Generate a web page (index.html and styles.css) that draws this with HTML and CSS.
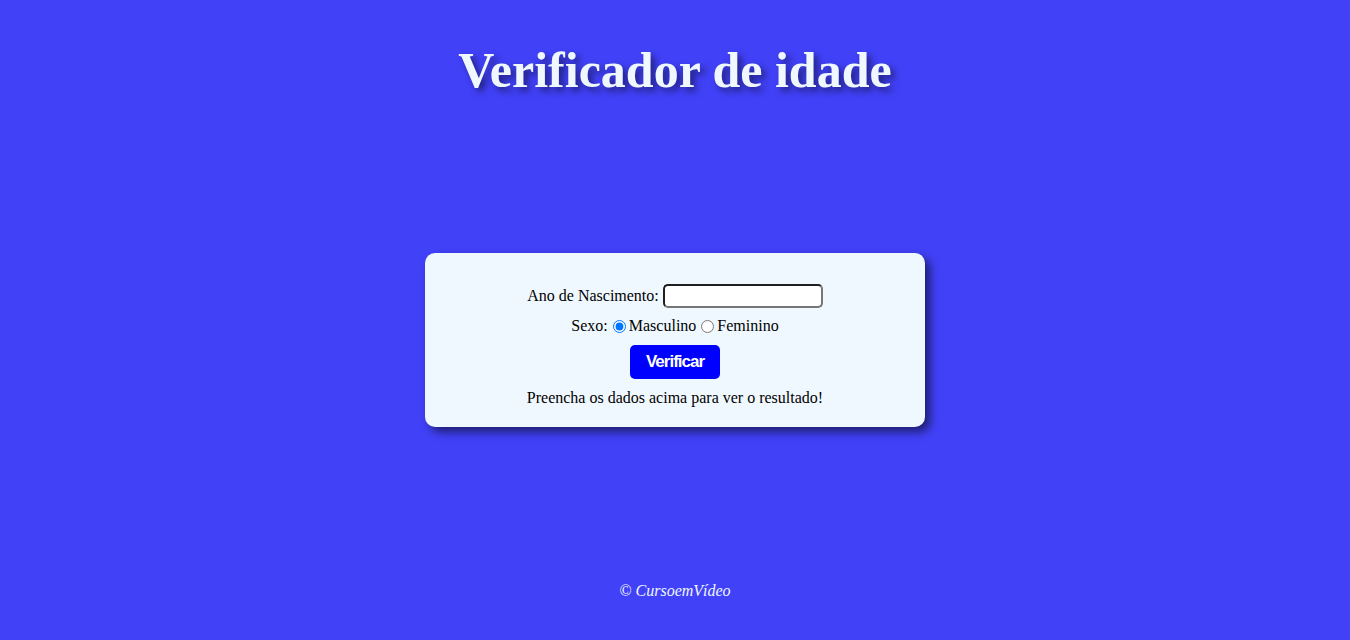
FILE: index.html
```html
<!DOCTYPE html>
<html lang="pt-BR">
<head>
<meta charset="UTF-8">
<title>Verificador de idade</title>
<link rel="stylesheet" href="styles.css">
</head>
<body>
<header class="topo">
  <h1 class="titulo">Verificador de idade</h1>
</header>
<section class="cartao">
  <div class="linha">
    <label for="txtano">Ano de Nascimento:</label>
    <input type="text" id="txtano" class="campo">
  </div>
  <div class="linha linha-sexo">
    <span>Sexo:</span>
    <input type="radio" name="sexo" id="mas" class="radio" checked><label for="mas">Masculino</label>
    <input type="radio" name="sexo" id="fem" class="radio"><label for="fem">Feminino</label>
  </div>
  <div class="linha linha-botao">
    <button type="button" class="botao">Verificar</button>
  </div>
  <div class="resultado">Preencha os dados acima para ver o resultado!</div>
</section>
<footer class="rodape">&copy; CursoemVídeo</footer>
</body>
</html>
```

FILE: styles.css
```css
html, body {
  margin: 0;
  padding: 0;
}
body {
  background: #4141f8;
  font-family: "Liberation Serif", "Times New Roman", serif;
  font-size: 16px;
  color: #000;
  height: 640px;
  overflow: hidden;
}
.topo {
  text-align: center;
  padding-top: 40px;
}
.titulo {
  margin: 0;
  font-size: 50px;
  line-height: 60px;
  font-weight: bold;
  color: aliceblue;
  text-shadow: 4px 4px 7px rgba(0, 0, 0, 0.5);
}
.cartao {
  width: 500px;
  box-sizing: border-box;
  margin: 153px auto 0;
  background: aliceblue;
  border-radius: 10px;
  padding: 31px 20px 20px;
  box-shadow: 5px 5px 10px rgba(0, 0, 0, 0.55);
  display: flex;
  flex-direction: column;
  align-items: center;
  text-align: center;
}
.linha {
  display: flex;
  align-items: center;
  justify-content: center;
  line-height: 18px;
}
.linha-sexo {
  margin-top: 9px;
}
.linha-botao {
  margin-top: 10px;
}
.campo {
  box-sizing: border-box;
  width: 160px;
  height: 24px;
  margin: 0 0 0 4px;
  border-style: solid;
  border-width: 2px;
  border-color: #1f1f1f #767676 #767676 #1f1f1f;
  border-radius: 5px;
  background: #fff;
  padding: 1px 2px;
}
.radio {
  margin: 0 3px 0 5px;
  width: 13px;
  height: 13px;
}
.botao {
  width: 90px;
  height: 34px;
  background: #0000ff;
  color: #fff;
  border: none;
  border-radius: 5px;
  font-family: "Liberation Sans", Arial, sans-serif;
  font-size: 17px;
  letter-spacing: -1px;
  font-weight: bold;
  padding: 0;
}
.resultado {
  margin-top: 10px;
  line-height: 18px;
}
.rodape {
  text-align: center;
  color: aliceblue;
  font-style: italic;
  margin-top: 155px;
}
```
